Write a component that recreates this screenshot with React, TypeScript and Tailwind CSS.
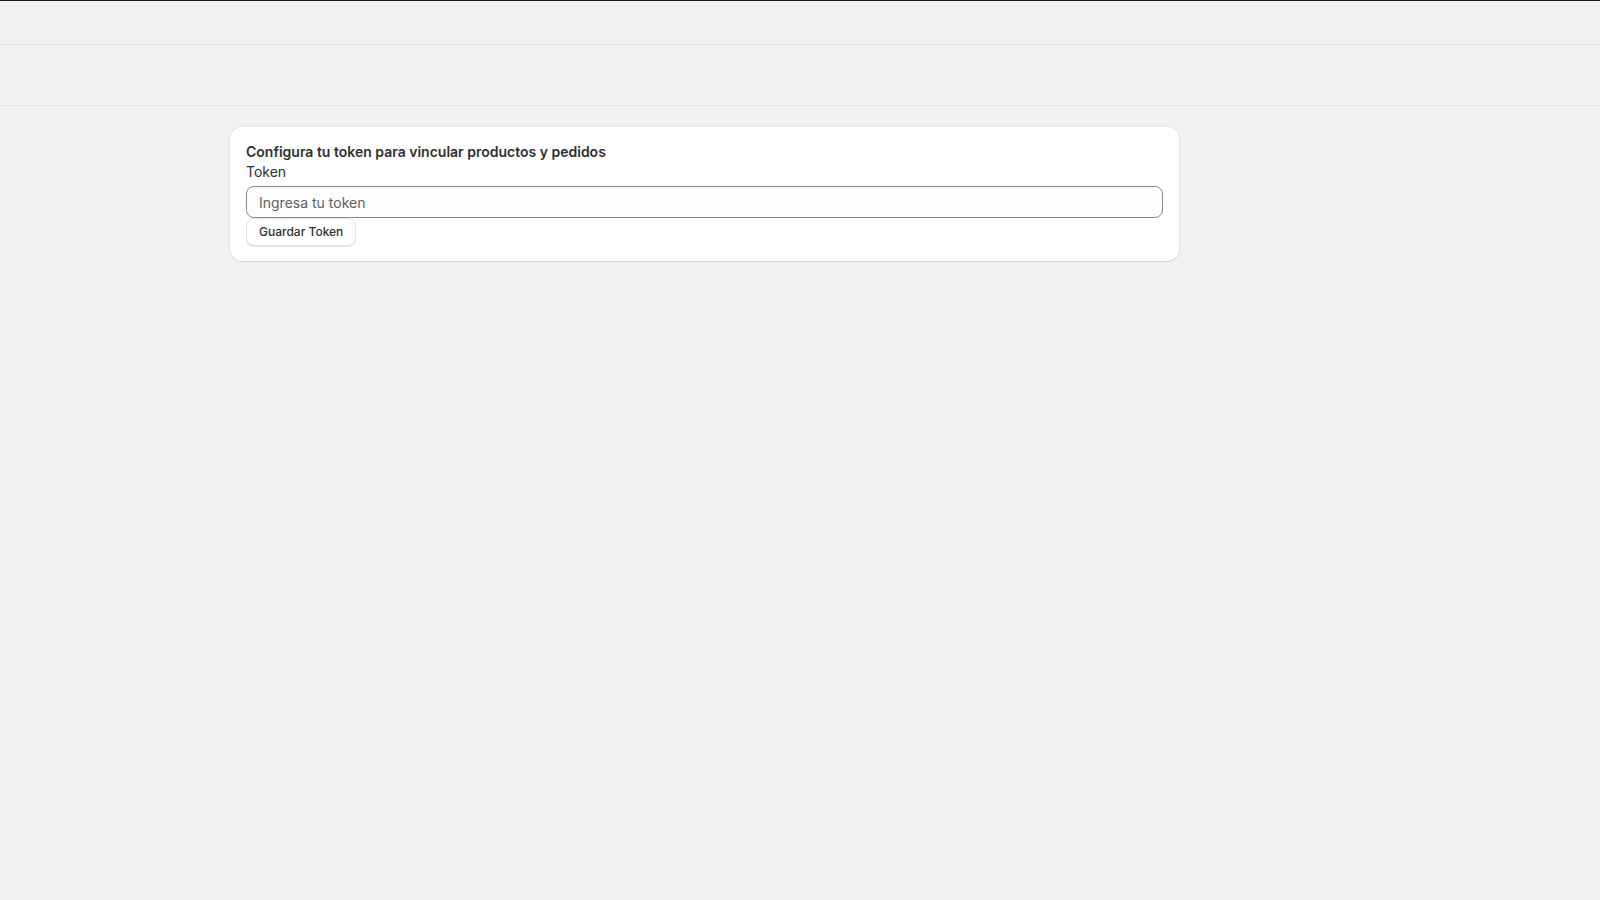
export default function App() {
  return (
    <div className="min-h-screen bg-[#f1f1f1] text-[#303030]" style={{ fontFamily: 'Inter, "Noto Sans", sans-serif' }}>
      <div className="h-px bg-[#1a1a1a]" />
      <div className="h-[44px] border-b border-[#e3e3e3]" />
      <div className="h-[61px] border-b border-[#e3e3e3]" />
      <div className="pt-[21px] pl-[230px]">
        <div className="w-[949px] rounded-xl bg-white px-4 pt-[15px] pb-[15px] shadow-[0_1px_0_0_rgba(26,26,26,0.07),0_0_0_1px_rgba(0,0,0,0.05)]">
          <h2 className="text-sm font-semibold leading-5 text-[#303030]">Configura tu token para vincular productos y pedidos</h2>
          <label className="block text-sm leading-5 text-[#303030]">Token</label>
          <input
            type="text"
            placeholder="Ingresa tu token"
            className="mt-1 block h-8 w-full rounded-lg border border-[#8a8a8a] bg-[#fdfdfd] px-3 text-sm text-[#303030] placeholder:text-[#616161] outline-none"
          />
          <button className="block h-7 rounded-lg border border-[#e3e3e3] bg-white px-3 text-xs font-medium text-[#303030] shadow-[0_1px_0_0_#e3e3e3]">
            Guardar Token
          </button>
        </div>
      </div>
    </div>
  );
}
